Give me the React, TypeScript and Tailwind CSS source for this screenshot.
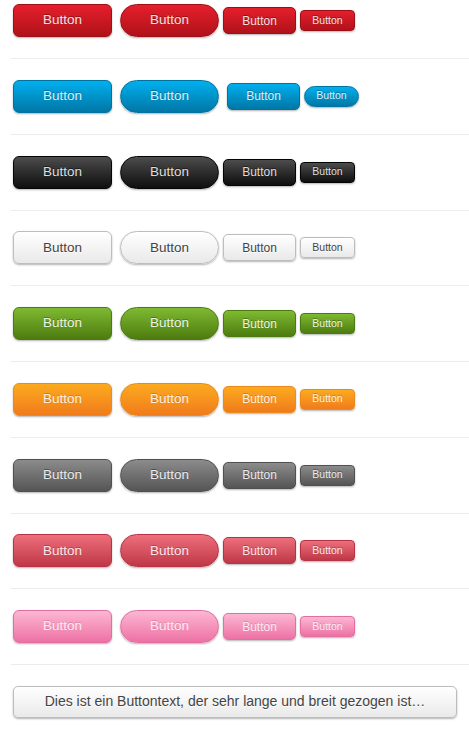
import React from "react";

type V = { c: string; t: string; blueSmall?: boolean; mediumGap?: string };

const variants: V[] = [
  { c: "bg-linear-to-b from-[#e51f2c] to-[#b0121a] border-[#9c0f16]", t: "text-[#f4e2e2] [text-shadow:0_-1px_0_rgba(0,0,0,0.35)]" },
  { c: "bg-linear-to-b from-[#00b0ef] to-[#0077a6] border-[#0074a0]", t: "text-[#dcf0f9] [text-shadow:0_-1px_0_rgba(0,0,0,0.3)]", blueSmall: true, mediumGap: "ml-[8px]" },
  { c: "bg-linear-to-b from-[#4d4d4d] to-[#0f0f0f] border-[#050505]", t: "text-[#dedede] [text-shadow:0_-1px_0_rgba(0,0,0,0.5)]" },
  { c: "bg-linear-to-b from-[#ffffff] to-[#e9e9e9] border-[#bdbdbd]", t: "text-[#444444] [text-shadow:0_1px_0_rgba(255,255,255,0.9)]" },
  { c: "bg-linear-to-b from-[#7fba31] to-[#4d7c0f] border-[#4b7a10]", t: "text-[#eef5e4] [text-shadow:0_-1px_0_rgba(0,0,0,0.3)]" },
  { c: "bg-linear-to-b from-[#fcaa1f] to-[#f07b1b] border-[#eb8a1e]", t: "text-[#fff2e2] [text-shadow:0_-1px_0_rgba(0,0,0,0.2)]" },
  { c: "bg-linear-to-b from-[#8c8c8c] to-[#555555] border-[#505050]", t: "text-[#ececec] [text-shadow:0_-1px_0_rgba(0,0,0,0.35)]" },
  { c: "bg-linear-to-b from-[#ee6e7b] to-[#bf3748] border-[#b53345]", t: "text-[#fde7ea] [text-shadow:0_-1px_0_rgba(0,0,0,0.25)]" },
  { c: "bg-linear-to-b from-[#fcb6d3] to-[#ec71a4] border-[#e26ea2]", t: "text-[#fdeaf2] [text-shadow:0_-1px_0_rgba(0,0,0,0.15)]" },
];

const base =
  "flex items-center justify-center border border-solid shadow-[0_1px_2px_rgba(0,0,0,0.3)] shrink-0";

function Row({ v }: { v: V }) {
  return (
    <div className="flex items-center h-[33px] pl-[2px]">
      <div className={`${base} ${v.c} w-[99px] h-[33px] rounded-[6px]`}>
        <span className={`${v.t} text-[13.5px]`}>Button</span>
      </div>
      <div className={`${base} ${v.c} w-[99px] h-[33px] rounded-full ml-[8px]`}>
        <span className={`${v.t} text-[13.5px]`}>Button</span>
      </div>
      <div className={`${base} ${v.c} w-[73px] h-[27px] rounded-[5px] ${v.mediumGap ?? "ml-[4px]"}`}>
        <span className={`${v.t} text-[12px]`}>Button</span>
      </div>
      <div
        className={`${base} ${v.c} w-[55px] h-[21px] ml-[4px] ${v.blueSmall ? "rounded-full" : "rounded-[4px]"}`}
      >
        <span className={`${v.t} text-[10.5px]`}>Button</span>
      </div>
    </div>
  );
}

export default function App() {
  return (
    <div
      className="bg-white w-[469px] h-[730px] pl-[11px] pt-[4px]"
      style={{ fontFamily: '"Liberation Sans", Arial, sans-serif' }}
    >
      {variants.map((v, i) => (
        <div key={i}>
          <Row v={v} />
          <div className="h-px bg-[#ececec] mt-[21px] mb-[20.75px]" />
        </div>
      ))}
      <div className="pl-[2px] pr-[12px]">
        <div className={`${base} bg-linear-to-b from-[#ffffff] to-[#e9e9e9] border-[#bdbdbd] h-[32px] rounded-[5px]`}>
          <span className="text-[#444444] text-[14px] [text-shadow:0_1px_0_rgba(255,255,255,0.9)]">
            Dies ist ein Buttontext, der sehr lange und breit gezogen ist…
          </span>
        </div>
      </div>
    </div>
  );
}
